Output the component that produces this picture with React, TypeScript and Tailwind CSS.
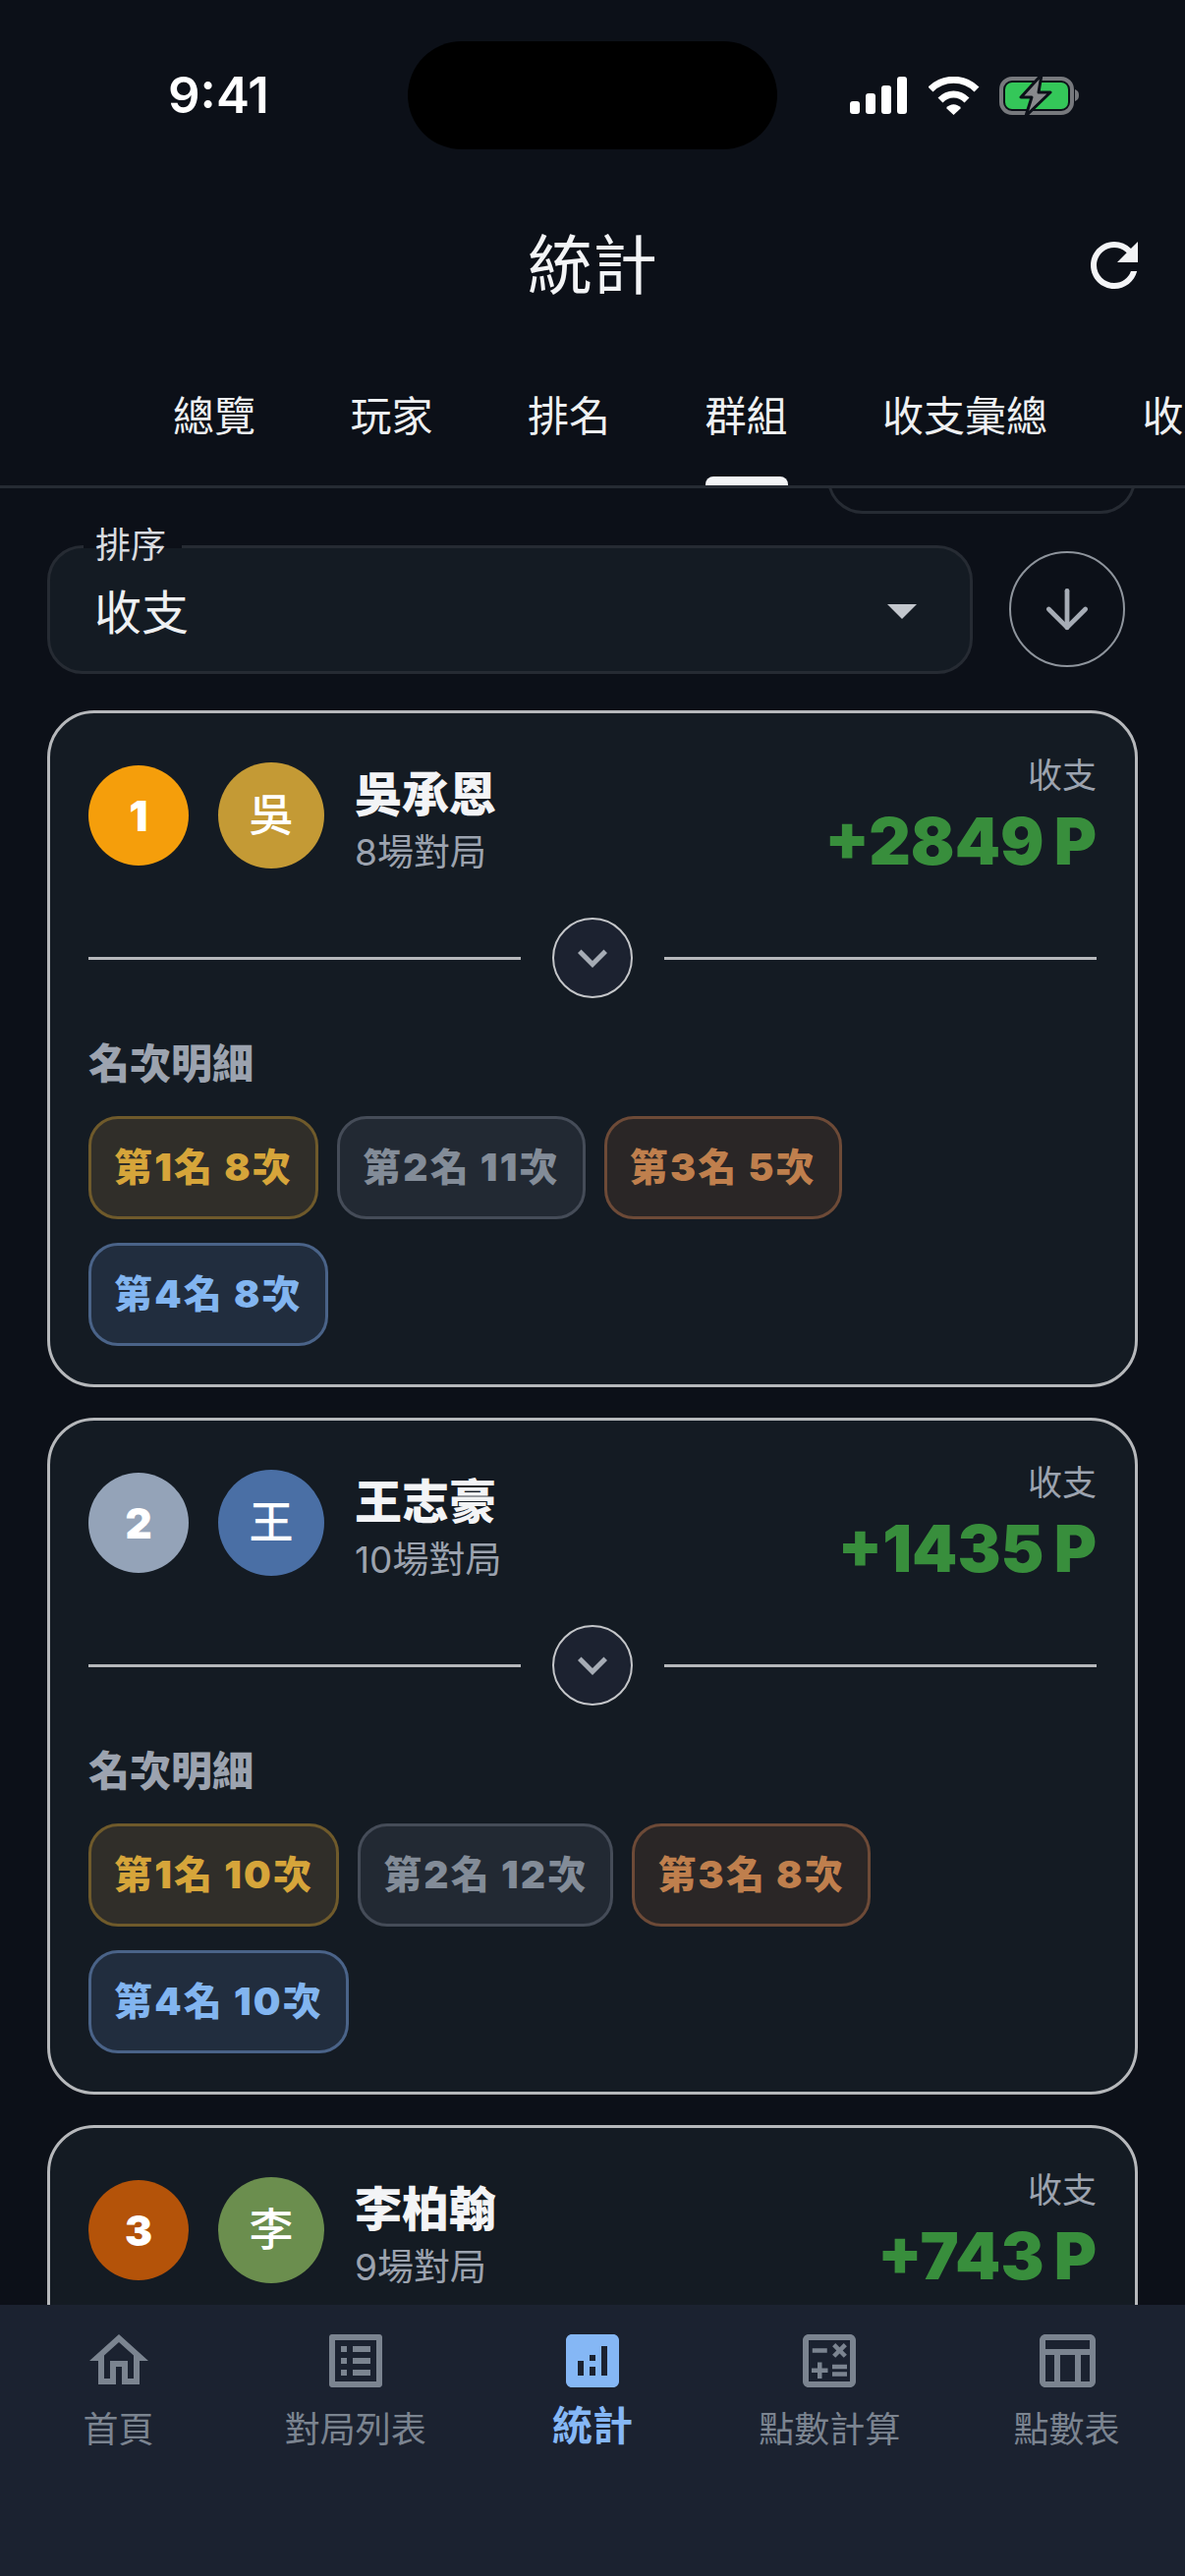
import React from "react";
import { MdRefresh, MdArrowDropDown, MdKeyboardArrowDown, MdOutlineHome, MdOutlineListAlt, MdAnalytics, MdOutlineCalculate, MdOutlineTableChart } from "react-icons/md";
import { ArrowDown } from "lucide-react";

const tabs = ["總覽", "玩家", "排名", "群組", "收支彙總", "收支"];

const chipStyles = [
  "border-[#6f5a2b] bg-[#302e29] text-[#d6a53a]",
  "border-[#454c58] bg-[#222933] text-[#838c98]",
  "border-[#6d4a37] bg-[#2a2626] text-[#bf7f4d]",
  "border-[#4a6388] bg-[#212d3e] text-[#82b5f0]",
];

function StatusBar() {
  return (
    <div className="relative h-[215px] shrink-0">
      <div className="absolute left-[415px] top-[42px] h-[110px] w-[376px] rounded-[55px] bg-black" />
      <div className="absolute left-[171px] top-[66px] text-[51px] font-semibold leading-[62px] text-white">9:41</div>
      <svg className="absolute left-[864px] top-[78px]" width="60" height="40" viewBox="0 0 60 40" fill="#fff">
        <rect x="1" y="25" width="10" height="13" rx="3" />
        <rect x="17" y="17" width="10" height="21" rx="3" />
        <rect x="33" y="9" width="10" height="29" rx="3" />
        <rect x="49" y="0" width="10" height="38" rx="3" />
      </svg>
      <svg className="absolute left-[945px] top-[78px]" width="52" height="40" viewBox="0 0 52 40" fill="none">
        <path d="M2 13 C15 0 36 0 49 13" stroke="#fff" strokeWidth="7" />
        <path d="M12 24 C20 16 31 16 39 24" stroke="#fff" strokeWidth="7" />
        <path d="M18 32 C22 27 29 27 33 32 L25.5 39 Z" fill="#fff" />
      </svg>
      <svg className="absolute left-[1017px] top-[76px]" width="84" height="42" viewBox="0 0 84 42" fill="none">
        <rect x="2" y="4" width="72" height="35" rx="11" stroke="#77797d" strokeWidth="4" />
        <rect x="6" y="8" width="64" height="27" rx="7" fill="#34c759" />
        <path d="M77 15 C80 16 81 18 81 21 C81 24 80 26 77 27 Z" fill="#77797d" />
        <path d="M43 0 L22 23 H33 L27 42 L52 18 H40 Z" fill="#88898d" stroke="#0c1018" strokeWidth="3" strokeLinejoin="round" />
      </svg>
    </div>
  );
}

function Header() {
  return (
    <div className="relative flex h-[110px] shrink-0 items-center justify-center">
      <span className="text-[66px] leading-none text-[#f3f4f6]">統計</span>
      <MdRefresh className="absolute right-[36px] top-[19px] text-[#f3f4f6]" size={72} />
    </div>
  );
}

function Tabs() {
  return (
    <div className="relative mt-[40px] flex h-[132px] shrink-0 overflow-hidden border-b-[3px] border-[#262b33] pl-[176px]">
      <div className="flex gap-[96.5px]">
        {tabs.map((t, i) => (
          <div key={t} className="relative flex h-full shrink-0 items-start pt-[31px]">
            <span className="whitespace-nowrap text-[42px] leading-[56px] text-[#eef0f2]">{t}</span>
            {i === 3 && <div className="absolute bottom-0 left-0 h-[9px] w-full rounded-t-[8px] bg-[#f3f4f6]" />}
          </div>
        ))}
      </div>
    </div>
  );
}

function SortBar() {
  return (
    <div className="relative flex h-[226px] shrink-0 items-start overflow-hidden px-[48px] pt-[58px]">
      <div className="absolute left-[842px] top-[-30px] h-[56px] w-[314px] rounded-b-[36px] border-[3px] border-[#262b33]" />
      <div className="relative flex h-[131px] w-[942px] items-center justify-between rounded-[36px] border-[3px] border-[#262b33] bg-[#141b23] pl-[45px] pr-[33px]">
        <div className="absolute left-[34px] top-[-3px] h-[3px] w-[100px] bg-[#0c1018]" />
        <span className="absolute left-[46px] top-[-25px] text-[36px] leading-[44px] text-[#d9dce0]">排序</span>
        <span className="pt-[6px] text-[48px] leading-[60px] text-[#eef0f2]">收支</span>
        <MdArrowDropDown className="text-[#c3c7cd]" size={72} />
      </div>
      <div className="ml-[37px] mt-[6px] flex h-[118px] w-[118px] items-center justify-center rounded-full border-2 border-[#8e949c]">
        <ArrowDown className="text-[#a6acb5]" size={64} strokeWidth={1.8} />
      </div>
    </div>
  );
}

function Card({ rank, rankColor, avatarColor, initial, name, games, amount, chips }: {
  rank: number; rankColor: string; avatarColor: string; initial: string; name: string; games: number; amount: string; chips: string[];
}) {
  return (
    <div className="h-[689px] shrink-0 rounded-[48px] border-[3px] border-[#b6b8bb] bg-[#141b23] px-[39px] pt-[31px]">
      <div className="flex h-[146px] justify-between">
        <div className="flex items-center">
          <div className={`flex h-[102px] w-[102px] items-center justify-center rounded-full text-[42px] font-black text-white ${rankColor}`}>{rank}</div>
          <div className={`ml-[30px] flex h-[108px] w-[108px] items-center justify-center rounded-full text-[45px] font-medium text-white ${avatarColor}`}>{initial}</div>
          <div className="ml-[31px] flex flex-col pt-[14px]">
            <span className="text-[48px] font-black leading-[62px] text-[#f3f4f6]">{name}</span>
            <span className="text-[37px] leading-[56px] text-[#9ca3af]">{games}場對局</span>
          </div>
        </div>
        <div className="flex flex-col items-end pt-[10px]">
          <span className="text-[35px] leading-[44px] text-[#9ca3af]">收支</span>
          <span className="mt-[5px] text-[66px] font-black leading-[80px] text-[#388e3c] [word-spacing:-3px]">{amount}</span>
        </div>
      </div>
      <div className="mt-[31px] flex items-center gap-[32px]">
        <div className="h-[3px] flex-1 bg-[#b6b8bb]" />
        <div className="flex h-[82px] w-[82px] items-center justify-center rounded-full border-[2px] border-[#c4c6c9] bg-[#1c2230]">
          <MdKeyboardArrowDown className="text-[#a6acb5]" size={60} />
        </div>
        <div className="h-[3px] flex-1 bg-[#b6b8bb]" />
      </div>
      <div className="mt-[39px] text-[42px] font-black leading-[56px] text-[#9ca3af]">名次明細</div>
      <div className="mt-[25px] flex flex-wrap gap-x-[19px] gap-y-[24px] pr-[60px]">
        {chips.map((c, i) => (
          <div key={c} className={`flex h-[105px] items-center rounded-[30px] border-[3px] px-[23px] text-[39px] font-black tracking-[2.2px] ${chipStyles[i]}`}>{c}</div>
        ))}
      </div>
    </div>
  );
}

function BottomNav() {
  const items = [
    { label: "首頁", Icon: MdOutlineHome },
    { label: "對局列表", Icon: MdOutlineListAlt },
    { label: "統計", Icon: MdAnalytics, active: true },
    { label: "點數計算", Icon: MdOutlineCalculate },
    { label: "點數表", Icon: MdOutlineTableChart },
  ];
  return (
    <div className="grid h-[276px] shrink-0 grid-cols-5 bg-[#1b2230] pt-[21px]">
      {items.map(({ label, Icon, active }) => (
        <div key={label} className={`flex flex-col items-center ${active ? "text-[#85b7f5]" : "text-[#7b8490]"}`}>
          <Icon size={72} />
          {active ? (
            <span className="mt-[3px] text-[41px] font-bold leading-[54px]">{label}</span>
          ) : (
            <span className="mt-[7px] text-[36px] leading-[54px]">{label}</span>
          )}
        </div>
      ))}
    </div>
  );
}

export default function App() {
  return (
    <div className="flex h-[2622px] w-[1206px] flex-col overflow-hidden bg-[#0c1018] [font-family:Inter,'Noto_Sans_CJK_TC',sans-serif]">
      <StatusBar />
      <Header />
      <Tabs />
      <SortBar />
      <div className="flex min-h-0 flex-1 flex-col gap-[31px] overflow-hidden px-[48px]">
        <Card rank={1} rankColor="bg-[#f59e0b]" avatarColor="bg-[#c49a35]" initial="吳" name="吳承恩" games={8} amount="+2849 P" chips={["第1名 8次", "第2名 11次", "第3名 5次", "第4名 8次"]} />
        <Card rank={2} rankColor="bg-[#94a3b8]" avatarColor="bg-[#4a6fa5]" initial="王" name="王志豪" games={10} amount="+1435 P" chips={["第1名 10次", "第2名 12次", "第3名 8次", "第4名 10次"]} />
        <Card rank={3} rankColor="bg-[#b45309]" avatarColor="bg-[#6b8e4e]" initial="李" name="李柏翰" games={9} amount="+743 P" chips={[]} />
      </div>
      <BottomNav />
    </div>
  );
}
